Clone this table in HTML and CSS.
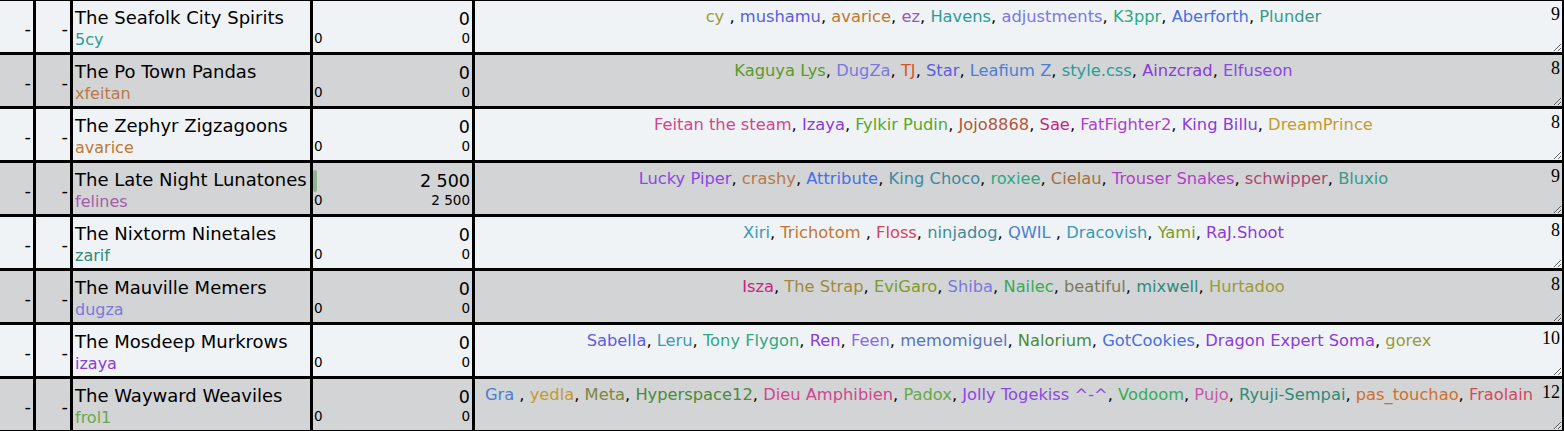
FILE: index.html
```html
<!DOCTYPE html>
<html lang="en">
<head>
<meta charset="utf-8">
<title>Teams</title>
<link rel="stylesheet" href="styles.css">
</head>
<body>
<div class="board">

  <div class="row light">
    <div class="cell rank">-</div>
    <div class="cell rank">-</div>
    <div class="cell team"><div class="team-name">The Seafolk City Spirits</div><div class="team-sub c-teal">5cy</div></div>
    <div class="cell score"><div class="score-main"><span class="total">0</span></div><div class="score-sub"><span>0</span><span>0</span></div></div>
    <div class="cell members"><div class="names"><span class="c-olive">cy </span>, <span class="c-violet">mushamu</span>, <span class="c-orange">avarice</span>, <span class="c-lilac">ez</span>, <span class="c-teal">Havens</span>, <span class="c-peri">adjustments</span>, <span class="c-sea">K3ppr</span>, <span class="c-royal">Aberforth</span>, <span class="c-tealgreen">Plunder</span></div><div class="count">9</div></div>
  </div>

  <div class="row dark">
    <div class="cell rank">-</div>
    <div class="cell rank">-</div>
    <div class="cell team"><div class="team-name">The Po Town Pandas</div><div class="team-sub c-tan">xfeitan</div></div>
    <div class="cell score"><div class="score-main"><span class="total">0</span></div><div class="score-sub"><span>0</span><span>0</span></div></div>
    <div class="cell members"><div class="names"><span class="c-grass">Kaguya Lys</span>, <span class="c-peri">DugZa</span>, <span class="c-red">TJ</span>, <span class="c-violet">Star</span>, <span class="c-sky">Leafium Z</span>, <span class="c-teal">style.css</span>, <span class="c-purple">Ainzcrad</span>, <span class="c-purple2">Elfuseon</span></div><div class="count">8</div></div>
  </div>

  <div class="row light">
    <div class="cell rank">-</div>
    <div class="cell rank">-</div>
    <div class="cell team"><div class="team-name">The Zephyr Zigzagoons</div><div class="team-sub c-orange">avarice</div></div>
    <div class="cell score"><div class="score-main"><span class="total">0</span></div><div class="score-sub"><span>0</span><span>0</span></div></div>
    <div class="cell members"><div class="names"><span class="c-pink">Feitan the steam</span>, <span class="c-purple">Izaya</span>, <span class="c-lime">Fylkir Pudin</span>, <span class="c-rust">Jojo8868</span>, <span class="c-magenta">Sae</span>, <span class="c-orchid">FatFighter2</span>, <span class="c-purple">King Billu</span>, <span class="c-gold">DreamPrince</span></div><div class="count">8</div></div>
  </div>

  <div class="row dark">
    <div class="cell rank">-</div>
    <div class="cell rank">-</div>
    <div class="cell team"><div class="team-name">The Late Night Lunatones</div><div class="team-sub c-mauve">felines</div></div>
    <div class="cell score"><div class="score-main"><span class="bar"></span><span class="total">2&nbsp;500</span></div><div class="score-sub"><span>0</span><span>2&nbsp;500</span></div></div>
    <div class="cell members"><div class="names"><span class="c-purple2">Lucky Piper</span>, <span class="c-tan">crashy</span>, <span class="c-royal">Attribute</span>, <span class="c-steel">King Choco</span>, <span class="c-sea">roxiee</span>, <span class="c-brown">Cielau</span>, <span class="c-orchid">Trouser Snakes</span>, <span class="c-plum">schwipper</span>, <span class="c-tealgreen">Bluxio</span></div><div class="count">9</div></div>
  </div>

  <div class="row light">
    <div class="cell rank">-</div>
    <div class="cell rank">-</div>
    <div class="cell team"><div class="team-name">The Nixtorm Ninetales</div><div class="team-sub c-pine">zarif</div></div>
    <div class="cell score"><div class="score-main"><span class="total">0</span></div><div class="score-sub"><span>0</span><span>0</span></div></div>
    <div class="cell members"><div class="names"><span class="c-cyan">Xiri</span>, <span class="c-orange">Trichotom </span>, <span class="c-rose">Floss</span>, <span class="c-steel">ninjadog</span>, <span class="c-sky">QWIL </span>, <span class="c-cyan">Dracovish</span>, <span class="c-moss">Yami</span>, <span class="c-purple">RaJ.Shoot</span></div><div class="count">8</div></div>
  </div>

  <div class="row dark">
    <div class="cell rank">-</div>
    <div class="cell rank">-</div>
    <div class="cell team"><div class="team-name">The Mauville Memers</div><div class="team-sub c-peri">dugza</div></div>
    <div class="cell score"><div class="score-main"><span class="total">0</span></div><div class="score-sub"><span>0</span><span>0</span></div></div>
    <div class="cell members"><div class="names"><span class="c-magenta">Isza</span>, <span class="c-khaki">The Strap</span>, <span class="c-moss">EviGaro</span>, <span class="c-peri">Shiba</span>, <span class="c-green">Nailec</span>, <span class="c-gray">beatiful</span>, <span class="c-pine">mixwell</span>, <span class="c-olive">Hurtadoo</span></div><div class="count">8</div></div>
  </div>

  <div class="row light">
    <div class="cell rank">-</div>
    <div class="cell rank">-</div>
    <div class="cell team"><div class="team-name">The Mosdeep Murkrows</div><div class="team-sub c-purple">izaya</div></div>
    <div class="cell score"><div class="score-main"><span class="total">0</span></div><div class="score-sub"><span>0</span><span>0</span></div></div>
    <div class="cell members"><div class="names"><span class="c-violet">Sabella</span>, <span class="c-cyan">Leru</span>, <span class="c-sea">Tony Flygon</span>, <span class="c-purple">Ren</span>, <span class="c-lavender">Feen</span>, <span class="c-slate">memomiguel</span>, <span class="c-forest">Nalorium</span>, <span class="c-royal">GotCookies</span>, <span class="c-purple">Dragon Expert Soma</span>, <span class="c-olive">gorex</span></div><div class="count">10</div></div>
  </div>

  <div class="row dark">
    <div class="cell rank">-</div>
    <div class="cell rank">-</div>
    <div class="cell team"><div class="team-name">The Wayward Weaviles</div><div class="team-sub c-grass2">frol1</div></div>
    <div class="cell score"><div class="score-main"><span class="total">0</span></div><div class="score-sub"><span>0</span><span>0</span></div></div>
    <div class="cell members"><div class="names"><span class="c-sky">Gra </span>, <span class="c-gold">yedla</span>, <span class="c-khaki2">Meta</span>, <span class="c-forest">Hyperspace12</span>, <span class="c-pink">Dieu Amphibien</span>, <span class="c-grass2">Padox</span>, <span class="c-purple2">Jolly Togekiss ^-^</span>, <span class="c-green">Vodoom</span>, <span class="c-pink2">Pujo</span>, <span class="c-pine">Ryuji-Sempai</span>, <span class="c-tangerine">pas_touchao</span>, <span class="c-crimson">Fraolain</span></div><div class="count">12</div></div>
  </div>

</div>
</body>
</html>
```
FILE: styles.css
```css
html, body {
  margin: 0;
  padding: 0;
  overflow: hidden;
  background: #ffffff;
}

body {
  font-family: "DejaVu Sans", Verdana, sans-serif;
  color: #000;
}

.board {
  display: flex;
  flex-direction: column;
  gap: 3px;
  padding: 3px;
  background: #000;
  width: max-content;
  margin: -2px 0 0 -3px;
}

.row {
  display: grid;
  grid-template-columns: 33px 34px 237px 159px 1087px;
  column-gap: 3px;
  height: 51px;
}

.row.light .cell { background: #eff3f6; }
.row.dark .cell { background: #d3d4d6; }

.cell {
  box-sizing: border-box;
  min-width: 0;
}

.rank {
  display: flex;
  align-items: center;
  justify-content: flex-end;
  padding: 4px 2px 0 0;
  font-size: 18px;
}

.team {
  padding: 6px 2px 0 2px;
  white-space: nowrap;
  overflow: hidden;
}

.team-name {
  font-size: 18px;
  line-height: 22px;
}

.team-sub {
  font-size: 16px;
  line-height: 22px;
}

.score {
  padding: 7px 2px 0 0;
  display: flex;
  flex-direction: column;
}

.score-main {
  display: flex;
  height: 22px;
  font-size: 17.5px;
  line-height: 22px;
}

.score-main .total {
  margin-left: auto;
}

.bar {
  width: 4px;
  background: #8fb48b;
  border-radius: 2px;
}

.score-sub {
  display: flex;
  justify-content: space-between;
  font-size: 13.5px;
  line-height: 17px;
  padding-left: 1px;
}

.members {
  display: flex;
  align-items: flex-start;
  padding: 0 2px 0 1px;
  overflow: hidden;
  resize: both;
}

.names {
  flex: 1;
  min-width: 0;
  text-align: center;
  white-space: nowrap;
  font-size: 16.3px;
  padding-top: 6px;
}

.count {
  font-family: "Liberation Serif", "Times New Roman", serif;
  font-size: 18px;
  padding-top: 3px;
}

/* member colours */
.c-olive { color: #9c9a36; }
.c-violet { color: #5d5ce0; }
.c-orange { color: #c0782f; }
.c-lilac { color: #9b59b6; }
.c-teal { color: #2a9d96; }
.c-peri { color: #7b78e0; }
.c-sea { color: #2fa882; }
.c-royal { color: #4a6fe0; }
.c-tealgreen { color: #3a9a88; }
.c-tan { color: #b7794a; }
.c-grass { color: #5b9a2c; }
.c-red { color: #d8541f; }
.c-sky { color: #4a80d4; }
.c-purple { color: #8c3bd4; }
.c-purple2 { color: #8f47e0; }
.c-pink { color: #d0478e; }
.c-lime { color: #58a82a; }
.c-rust { color: #b0583a; }
.c-magenta { color: #c2297e; }
.c-orchid { color: #b040c8; }
.c-gold { color: #c49a2c; }
.c-mauve { color: #a25ea6; }
.c-steel { color: #3f8a9c; }
.c-brown { color: #a47040; }
.c-plum { color: #a84a6e; }
.c-pine { color: #2f8a76; }
.c-cyan { color: #3a9ab4; }
.c-rose { color: #d6455e; }
.c-moss { color: #7c9c28; }
.c-khaki { color: #a2883a; }
.c-green { color: #3aaa58; }
.c-gray { color: #7a7a5c; }
.c-lavender { color: #8a6ae0; }
.c-slate { color: #5a74b8; }
.c-forest { color: #4a8a3c; }
.c-grass2 { color: #68a84a; }
.c-khaki2 { color: #7c8640; }
.c-pink2 { color: #c45aaa; }
.c-tangerine { color: #d06f2a; }
.c-crimson { color: #d24a58; }
```
